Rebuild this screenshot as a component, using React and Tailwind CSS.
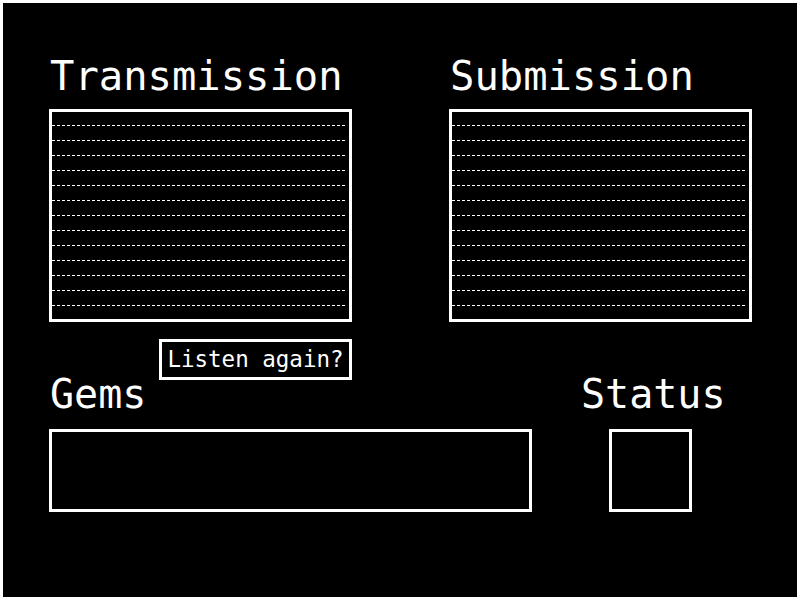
import React from 'react';

const LINES = Array.from({ length: 13 });

const RuledBox = () => (
  <div className="mt-[13px] w-[303px] h-[213px] border-[3px] border-white box-border flex flex-col gap-[14px] pt-[13px] pr-[2px]">
    {LINES.map((_, i) => (
      <div
        key={i}
        className="h-px w-full bg-[repeating-linear-gradient(90deg,#ffffff_0_3px,transparent_3px_5px)]"
      />
    ))}
  </div>
);

const Panel = ({ title }) => (
  <div className="flex flex-col w-[303px]">
    <h2 className="ml-px text-[40.5px] leading-[40px] h-[40px] whitespace-nowrap">{title}</h2>
    <RuledBox />
  </div>
);

const App = () => {
  return (
    <div
      className="w-[800px] h-[600px] bg-black text-white border-[3px] border-white box-border overflow-hidden"
      style={{ fontFamily: '"DejaVu Sans Mono", "Liberation Mono", monospace' }}
    >
      <div className="flex flex-col pl-[46px] pt-[53px]">
        {/* Transmission / Submission */}
        <div className="flex gap-[97px]">
          <Panel title="Transmission" />
          <Panel title="Submission" />
        </div>

        {/* Replay button */}
        <div className="w-[303px] flex justify-end mt-[17px]">
          <button className="w-[193px] h-[41px] border-[3px] border-white box-border flex items-center justify-center text-[22.5px] leading-none">
            Listen again?
          </button>
        </div>

        {/* Gems / Status */}
        <div className="flex ml-px">
          <h2 className="w-[531px] text-[40px] leading-[28px] h-[28px]">Gems</h2>
          <h2 className="text-[40px] leading-[28px] h-[28px]">Status</h2>
        </div>
        <div className="flex gap-[77px] mt-[21px]">
          <div className="w-[483px] h-[83px] border-[3px] border-white box-border" />
          <div className="w-[83px] h-[83px] border-[3px] border-white box-border" />
        </div>
      </div>
    </div>
  );
};

export default App;
